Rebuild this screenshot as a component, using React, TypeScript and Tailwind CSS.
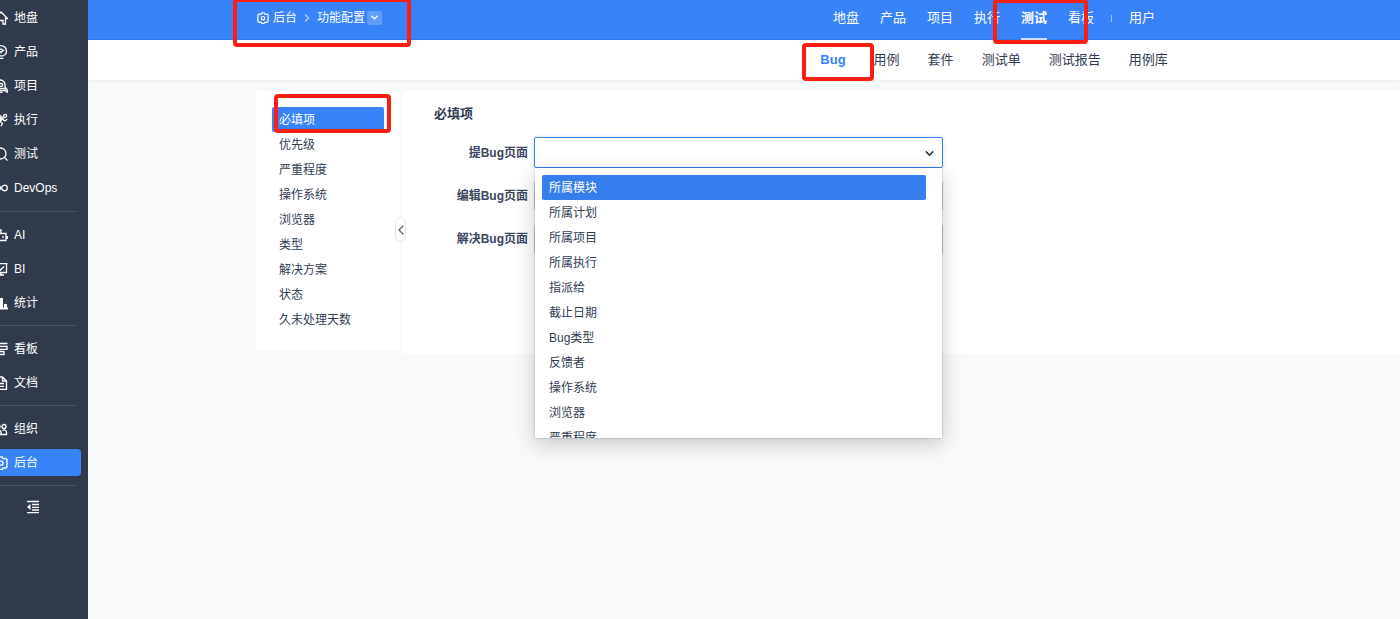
import { useState } from "react";
import type { ReactNode } from "react";
import { ChevronDown, ChevronLeft, ChevronRight } from "lucide-react";

interface SideItem {
  label: string;
  icon: ReactNode;
}

const adminIcon = (
  <>
    <path d="M5.700 .8h2.600l.5 1.500 1.300.6 1.500-.7 1.700 1.800-.7 1.500.6 1.200v1.200l-.6 1.200.7 1.500-1.700 1.700-1.500-.7-1.300.6-.5 1.300H5.700l-.5-1.300-1.300-.6-1.500.7L.7 10.600l.7-1.500-.6-1.200V6.700l.6-1.200L.7 4l1.700-1.800 1.500.7 1.300-.6z" />
    <circle cx="7" cy="7.200" r="2" />
  </>
);

const sideGroups: SideItem[][] = [
  [
    {
      label: "地盘",
      icon: <path d="M.5 7.500 7 1l6.500 6.500h-2V13H9V9.500H5V13H2.500V7.500z" />,
    },
    {
      label: "产品",
      icon: (
        <>
          <path d="M4.500 10.500C2.500 9.700 1.500 8 1.500 6.200a5.500 5.500 0 0 1 11 0c0 1.800-1 3.500-3 4.300M4.500 10.800h5M5 13.300h4.500" />
          <path d="M7 8.500V6.500M4.500 5.500 7 7l2.500-1.500L7 4z" />
        </>
      ),
    },
    {
      label: "项目",
      icon: (
        <>
          <path d="M3 11.500V6C3 3.300 4.800 1.600 7 .8c2.200.8 4 2.500 4 5.200v5.500zM3 8l-2.300 3v2.300L3 11.500M11 8l2.300 3v2.300L11 11.500M5.500 13.300h3" />
          <circle cx="7" cy="6" r="1.600" />
          <path d="M3.500 9.500h7" />
        </>
      ),
    },
    {
      label: "执行",
      icon: (
        <>
          <circle cx="11.200" cy="2.800" r="1.500" />
          <path d="M2 5l4-2.500L9.500 5 6 8.500 8.500 10.500 7 13.300M5 9l-2 2.500H0M9 6.500l1.800 1.500 2.500-2M7 4 4.500 7.500" />
          <path d="M7.500 4.500 5.500 7.500" strokeWidth="2.400" />
        </>
      ),
    },
    {
      label: "测试",
      icon: (
        <>
          <circle cx="6.500" cy="6.500" r="5.500" />
          <path d="m10.500 10.500 3 3" />
        </>
      ),
    },
    {
      label: "DevOps",
      icon: (
        <path d="M7 7C5.500 5 4.700 4.200 3.500 4.200a2.800 2.800 0 0 0 0 5.600C4.700 9.800 5.500 9 7 7s2.300-2.800 3.500-2.800a2.800 2.800 0 0 1 0 5.600C9.300 9.800 8.500 9 7 7z" />
      ),
    },
  ],
  [
    {
      label: "AI",
      icon: (
        <>
          <path d="M2 5.500h10v7H2zM7 5.500V2h-2M.7 8v3M13.300 8v3" />
          <path d="M5 8v2M9 8v2" />
        </>
      ),
    },
    {
      label: "BI",
      icon: (
        <path d="M.5 1.700h13M1.500 2v8.500h11V2M7 10.500v2M4 13h6M4.500 6l2 2L10 4.500" />
      ),
    },
    {
      label: "统计",
      icon: (
        <path
          d="M1 7h3v6H1zM5.500 2h3.500v11H5.500zM10 8h3v5h-3zM1 11.500h13v2H1z"
          fill="currentColor"
          stroke="none"
        />
      ),
    },
  ],
  [
    {
      label: "看板",
      icon: <path d="M.5 1.500h13M2 4.300h11v3H2zM2 9.500h8v3H2z" />,
    },
    {
      label: "文档",
      icon: (
        <path d="M2 1h6.500L12.500 5v8.300H2zM8.500 1v4h4M5 7.500h5M5 10.300h5" />
      ),
    },
  ],
  [
    {
      label: "组织",
      icon: (
        <>
          <circle cx="4" cy="4.500" r="2" />
          <circle cx="10" cy="4.500" r="2" />
          <path d="M1 12.500V10c0-2.500 6-2.500 6 0v2.500zM7.500 12.500h5V10c0-2.300-2.700-2.500-4-1.500" />
        </>
      ),
    },
    { label: "后台", icon: adminIcon },
  ],
];

const topNav = ["地盘", "产品", "项目", "执行", "测试", "看板"];
const subNav = ["Bug", "用例", "套件", "测试单", "测试报告", "用例库"];
const settings = [
  "必填项",
  "优先级",
  "严重程度",
  "操作系统",
  "浏览器",
  "类型",
  "解决方案",
  "状态",
  "久未处理天数",
];
const fields = ["提Bug页面", "编辑Bug页面", "解决Bug页面"];
const options = [
  "所属模块",
  "所属计划",
  "所属项目",
  "所属执行",
  "指派给",
  "截止日期",
  "Bug类型",
  "反馈者",
  "操作系统",
  "浏览器",
  "严重程度",
];

function Glyph({
  children,
  className = "size-3.5",
}: {
  children: ReactNode;
  className?: string;
}) {
  return (
    <svg
      viewBox="0 0 14 14"
      className={`shrink-0 ${className}`}
      fill="none"
      stroke="currentColor"
      strokeWidth="1.3"
      aria-hidden="true"
    >
      {children}
    </svg>
  );
}

// red frame drawn over the part it points at
function Mark({ className }: { className: string }) {
  return (
    <span
      className={`pointer-events-none absolute z-20 rounded-[4px] border-4 border-[#fc1e13] ${className}`}
    />
  );
}

function Sidebar() {
  return (
    <aside className="w-[88px] shrink-0 overflow-hidden bg-[#313a4b] text-xs text-white">
      <nav className="pt-1">
        {sideGroups.map((group, index) => (
          <div key={index}>
            <ul
              className={`flex flex-col gap-[7px] ${index === 0 ? "pb-px" : ""}`}
            >
              {group.map((item) => (
                <li key={item.label}>
                  <a
                    href="#"
                    className={`-ml-1.5 mr-[7px] flex h-[27px] items-center gap-1.5 rounded ${
                      item.label === "后台" ? "bg-[#3883fa]" : ""
                    }`}
                  >
                    <Glyph>{item.icon}</Glyph>
                    {item.label}
                  </a>
                </li>
              ))}
            </ul>
            <hr className="my-[9px] mr-[11px] border-[#4a5363]" />
          </div>
        ))}
      </nav>
      <button
        type="button"
        aria-label="收起菜单"
        className="ml-[26px] mt-[14px] block"
      >
        <Glyph>
          <path d="M1 1.500h12M6 4.500h7M6 7.300h7M6 10h7M1 12.700h12" />
          <path d="M4.500 4v6L1 7z" fill="currentColor" stroke="none" />
        </Glyph>
      </button>
    </aside>
  );
}

function Header() {
  return (
    <header className="relative z-10 text-[13px]">
      <div className="flex h-10 border-b border-[#3278ea] bg-[#3883fa] pl-[168px] text-white">
        <div className="relative flex h-[35px] w-[332px] shrink-0 items-center text-xs">
          <Glyph className="ml-px size-3">{adminIcon}</Glyph>
          <a href="#" className="ml-1">
            后台
          </a>
          <ChevronRight
            size={12}
            strokeWidth={3}
            className="mx-1 opacity-60"
          />
          <a href="#">功能配置</a>
          <button
            type="button"
            aria-label="切换"
            className="ml-[2px] flex h-3.5 w-[15px] items-center justify-center rounded-[2px] bg-[#619efb]"
          >
            <ChevronDown size={11} strokeWidth={3} />
          </button>
          <Mark className="-left-[23px] -top-[2px] h-[49px] w-[178px]" />
        </div>
        <nav className="flex flex-1 justify-center gap-px">
          {topNav.map((label) => (
            <a
              key={label}
              href="#"
              className="relative flex h-[35px] items-center px-2.5"
            >
              {label === "测试" ? (
                <>
                  <b>{label}</b>
                  <span className="absolute inset-x-2.5 top-[38px] h-[2px] bg-[#cfe1fe]" />
                  <Mark className="-left-[18px] -top-px h-[45px] w-[95px]" />
                </>
              ) : (
                label
              )}
            </a>
          ))}
          <span className="mx-1.5 mt-[15px] h-[7px] w-px bg-[#9cc2fd]" />
          <a href="#" className="flex h-[35px] items-center px-2.5">
            用户
          </a>
        </nav>
      </div>
      <div className="flex h-10 bg-white pl-[500px] text-[#313c52] shadow-[0_1px_3px_rgba(0,0,0,0.06)]">
        <nav className="flex flex-1 items-center justify-center gap-7 pb-px">
          {subNav.map((label) => (
            <a key={label} href="#" className="relative">
              {label === "Bug" ? (
                <>
                  <b className="text-[#3883fa]">{label}</b>
                  <Mark className="-left-[18px] -top-2 h-[38px] w-[72px]" />
                </>
              ) : (
                label
              )}
            </a>
          ))}
        </nav>
      </div>
    </header>
  );
}

function SettingsMenu() {
  return (
    <aside className="relative w-36 shrink-0 self-start bg-white px-4 pb-[18px] pt-4">
      <ul>
        {settings.map((label, index) => (
          <li key={label}>
            <a
              href="#"
              className={`flex h-[25px] w-28 items-center rounded-[2px] px-[7px] ${
                index === 0 ? "bg-[#3883fa] text-white" : ""
              }`}
            >
              {label}
            </a>
          </li>
        ))}
      </ul>
      <Mark className="left-[18px] top-[3px] h-[39px] w-[117px]" />
      <button
        type="button"
        aria-label="折叠"
        className="absolute -right-1.5 top-[126px] z-10 flex h-[25px] w-[11px] items-center justify-center rounded-full border border-[#e3e6ec] bg-white text-[#5e6779]"
      >
        <ChevronLeft size={16} className="shrink-0" />
      </button>
    </aside>
  );
}

function RequiredForm() {
  const [value, setValue] = useState("");

  return (
    <section className="h-[263px] min-w-0 flex-1 rounded-l bg-white pl-8 pt-[13px]">
      <h2 className="text-[13px] font-bold leading-5">必填项</h2>
      <form className="mt-[13px] flex flex-col gap-[13px]">
        {fields.map((label, index) => (
          <div key={label} className="flex items-center gap-1.5">
            <label
              htmlFor={`field-${index}`}
              className="w-[94px] shrink-0 text-right font-bold text-[#3c4560]"
            >
              {label}
            </label>
            {index === 0 ? (
              <div className="relative w-[409px]">
                <input
                  id="field-0"
                  role="combobox"
                  aria-expanded="true"
                  aria-controls="field-options"
                  value={value}
                  onChange={(e) => setValue(e.target.value)}
                  className="block h-[31px] w-full rounded-[2px] border border-[#3883fa] bg-white px-2 shadow-[0_0_4px_rgba(56,131,250,0.25)] outline-none"
                />
                <ChevronDown
                  size={13}
                  strokeWidth={3}
                  className="pointer-events-none absolute right-[7px] top-2.5"
                />
                <ul
                  id="field-options"
                  role="listbox"
                  className="absolute inset-x-px top-full z-10 h-[270px] overflow-hidden bg-white pl-[7px] pr-4 pt-[7px] shadow-[0_6px_20px_rgba(0,0,0,0.2),0_0_2px_rgba(0,0,0,0.25)]"
                >
                  {options.map((option, i) => (
                    <li
                      key={option}
                      role="option"
                      aria-selected={i === 0}
                      onClick={() => setValue(option)}
                      className={`flex h-[25px] items-center rounded-[2px] px-[7px] ${
                        i === 0 ? "bg-[#377eed] text-white" : ""
                      }`}
                    >
                      {option}
                    </li>
                  ))}
                </ul>
              </div>
            ) : (
              <input
                id={`field-${index}`}
                className="h-[30px] w-[409px] rounded-[2px] border border-[#c9cbdb] bg-white px-2"
              />
            )}
          </div>
        ))}
      </form>
    </section>
  );
}

export default function App() {
  return (
    <div className="flex min-h-screen overflow-hidden bg-[#f8f9fb] font-['Liberation_Sans','Noto_Sans_CJK_SC',sans-serif] text-xs text-[#313c52]">
      <Sidebar />
      <div className="min-w-0 flex-1">
        <Header />
        <main className="flex gap-[2px] pl-[168px] pt-[11px]">
          <SettingsMenu />
          <RequiredForm />
        </main>
      </div>
    </div>
  );
}
